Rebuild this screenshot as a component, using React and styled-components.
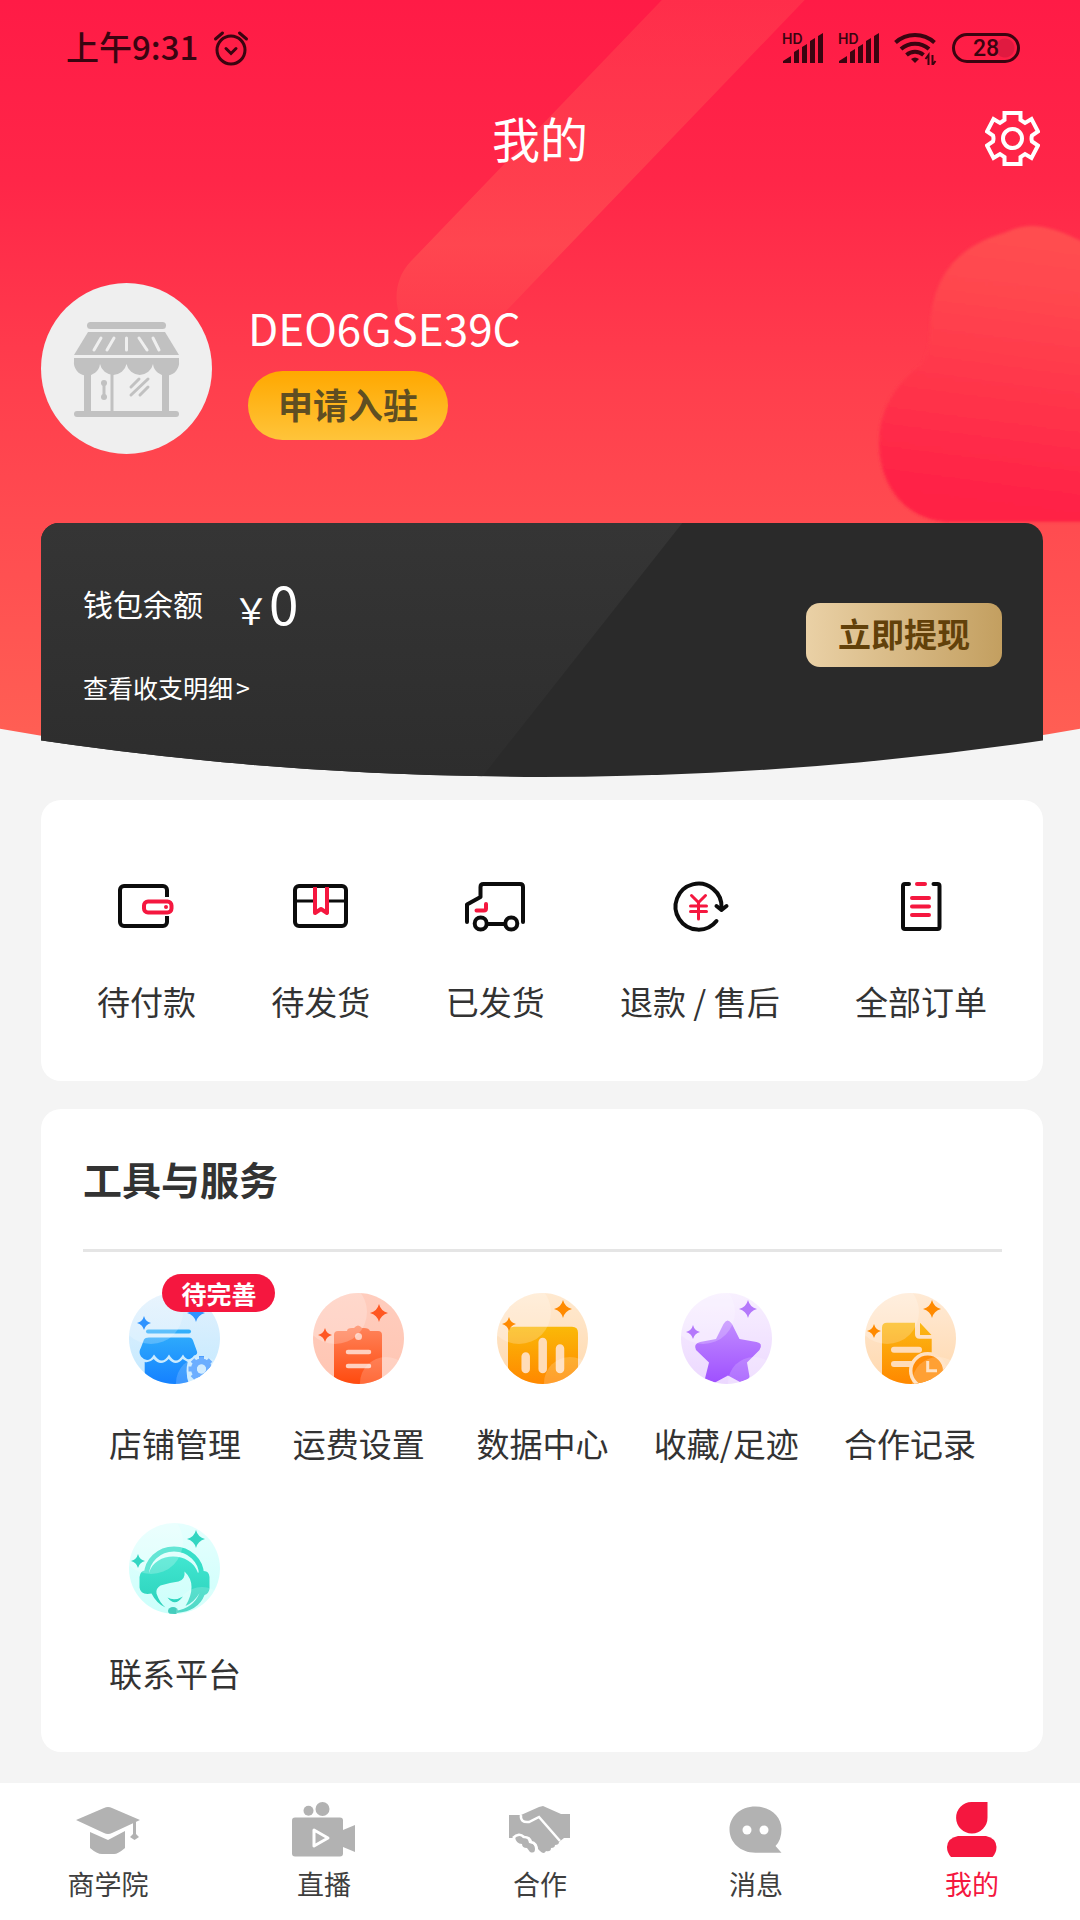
import React from 'react'
import styled, { createGlobalStyle } from 'styled-components'

const RED = '#f5173f'
const INK = '#3a0410'
const TEXT = '#333333'
const GREY = '#b2b2b2'

const GlobalStyle = createGlobalStyle`
    * {
        box-sizing: border-box;
    }
    body {
        margin: 0;
        background: #f4f4f4;
        color: ${TEXT};
        font-family: "Noto Sans CJK SC", "Noto Sans", sans-serif;
    }
    h1, h2, p {
        margin: 0;
    }
    svg {
        display: block;
    }
`

const Page = styled.div`
    min-height: 100vh;
    display: flex;
    flex-direction: column;
`

const Hero = styled.header`
    position: relative;
    isolation: isolate;
`

const HeroBackground = styled.div`
    position: absolute;
    inset: 0 0 1px;
    z-index: -1;
    overflow: hidden;
    background: linear-gradient(#ff1b46 0, #ff2648 180px, #ff3f4d 390px, #ff4b50 520px, #ff5f54 740px);
    clip-path: circle(3102px at 50% calc(100% - 3102px));
`

const BandArt = styled.svg`
    position: absolute;
    top: 0;
    left: 50%;
    margin-left: -150px;
`

const BlobArt = styled.svg`
    position: absolute;
    top: 210px;
    right: 0;
`

const StatusBar = styled.div`
    height: 96px;
    padding: 0 60px 0 66px;
    display: flex;
    align-items: center;
    justify-content: space-between;
    color: ${INK};
`

const StatusGroup = styled.div`
    display: flex;
    align-items: center;
    gap: 15px;
`

const Clock = styled.span`
    padding-bottom: 4px;
    font-size: 33px;
    line-height: 48px;
    font-weight: 500;
`

const Battery = styled.span`
    width: 68px;
    height: 30px;
    border: 3px solid ${INK};
    border-radius: 15px;
    font: 500 23px/25px Roboto, sans-serif;
    text-align: center;
    background: radial-gradient(circle at 50px 12px, #e01a40 9px, transparent 10px);
`

const TitleBar = styled.div`
    height: 84px;
    padding: 0 40px;
    display: grid;
    grid-template-columns: 1fr auto 1fr;
    align-items: center;
`

const Title = styled.h1`
    grid-column: 2;
    padding-bottom: 2px;
    font-size: 48px;
    line-height: 70px;
    font-weight: 400;
    color: #ffffff;
`

const IconButton = styled.button`
    justify-self: end;
    padding: 0;
    border: 0;
    background: none;
    cursor: pointer;
`

const Profile = styled.section`
    padding: 103px 37px 69px 41px;
    display: flex;
    align-items: center;
    gap: 36px;
`

const Avatar = styled.div`
    width: 171px;
    height: 171px;
    border-radius: 50%;
    background: #efefef;
`

const ShopName = styled.h2`
    font-size: 44px;
    line-height: 60px;
    font-weight: 400;
    color: #ffffff;
`

const ApplyButton = styled.button`
    height: 69px;
    margin-top: 14px;
    padding: 0 30px 4px;
    border: 0;
    border-radius: 35px;
    background: linear-gradient(#ffa800, #ffc43a);
    color: #5f4e22;
    font: inherit;
    font-size: 35px;
    font-weight: 700;
    cursor: pointer;
`

const Wallet = styled.section`
    position: relative;
    isolation: isolate;
    margin: 0 37px 0 41px;
    padding: 42px 41px 72px 42px;
    border-radius: 18px 18px 0 0;
    background: #2a2a2a;
    color: #ffffff;
    display: flex;
    align-items: center;
    justify-content: space-between;
    clip-path: circle(3458px at 50% calc(100% - 3458px));

    &::before {
        content: '';
        position: absolute;
        inset: 0;
        z-index: -1;
        border-radius: inherit;
        background: linear-gradient(#353535, #2d2d2d);
        clip-path: polygon(0 0, 64% 0, 44% 100%, 0 100%);
    }
`

const Balance = styled.div`
    height: 76px;
    display: flex;
    align-items: center;
    gap: 30px;
    font-size: 30px;
    line-height: 76px;
`

const Amount = styled.span`
    padding-top: 4px;
    display: flex;
    align-items: baseline;
    font-size: 53px;

    small {
        font-size: 36px;
    }
`

const DetailLink = styled.a`
    display: flex;
    gap: 3px;
    margin-top: 28px;
    font-size: 25px;
    line-height: 36px;
    color: inherit;
    text-decoration: none;
`

const WithdrawButton = styled.button`
    height: 64px;
    padding: 0 32px 4px;
    border: 0;
    border-radius: 14px;
    background: linear-gradient(90deg, #ead1a6, #c39f60);
    color: #62410a;
    font: inherit;
    font-size: 33px;
    font-weight: 700;
    cursor: pointer;
`

const Main = styled.main`
    flex: 1;
    padding: 23px 37px 31px 41px;
    display: flex;
    flex-direction: column;
    gap: 28px;
`

const Card = styled.section`
    border-radius: 20px;
    background: #ffffff;
`

const OrderList = styled(Card)`
    padding: 76px 56px 56px;
    display: flex;
    justify-content: space-between;
`

const Entry = styled.a`
    display: flex;
    flex-direction: column;
    align-items: center;
    gap: ${(props) => props.$gap}px;
    font-size: 33px;
    line-height: 48px;
    color: ${TEXT};
    text-decoration: none;
    white-space: nowrap;
`

const Tools = styled(Card)`
    padding: 40px 41px 55px 42px;
`

const ToolsTitle = styled.h2`
    padding-bottom: 42px;
    border-bottom: 3px solid #e5e5e5;
    font-size: 39px;
    line-height: 58px;
    font-weight: 700;
`

const ToolGrid = styled.div`
    padding-top: 41px;
    display: grid;
    grid-template-columns: repeat(5, 1fr);
    row-gap: 56px;
`

const ToolIcon = styled.span`
    position: relative;
`

const Badge = styled.span`
    position: absolute;
    top: -19px;
    left: 33px;
    padding: 0 19px;
    border-radius: 19px;
    background: ${RED};
    color: #ffffff;
    font-size: 25px;
    line-height: 38px;
    font-weight: 700;
`

const TabBar = styled.nav`
    position: sticky;
    bottom: 0;
    padding: 18px 0;
    display: grid;
    grid-template-columns: repeat(5, 1fr);
    background: #ffffff;
`

const Tab = styled.a`
    display: flex;
    flex-direction: column;
    align-items: center;
    gap: 9px;
    font-size: 27px;
    line-height: 36px;
    color: ${(props) => (props.$active ? RED : '#3e3e3e')};
    text-decoration: none;
`

/* status bar */

const AlarmIcon = () => (
    <svg width="36" height="36" viewBox="0 0 36 36" fill="none" stroke={INK} strokeWidth="3" strokeLinecap="round">
        <circle cx="18" cy="20" r="14" />
        <path d="M13 18.500l5 5 5-5M2.500 9l7-6M33.500 9l-7-6" />
    </svg>
)

const SignalIcon = () => (
    <svg width="41" height="44" viewBox="0 -6 41 44" fill={INK}>
        <text x="0" y="12" fontFamily="Inter, sans-serif" fontSize="14" fontWeight="600">HD</text>
        <path d="M1 31v-2l8-5v7zM12 31V20l5-3v14zM20 31V15l5-3v19zM28 31V9l5-3v25zM36 31V4l5-3v30z" />
    </svg>
)

const WifiIcon = () => (
    <svg width="43" height="34" viewBox="0 0 43 34" fill="none" stroke={INK} strokeWidth="4">
        <path d="M1.500 11.500a29 29 0 0 1 39 0M7 18a21 21 0 0 1 28 0M12.500 24a13 13 0 0 1 17 0" />
        <path d="M17 28q4-3 8 0l-4 4z" fill={INK} stroke="none" />
        <path d="M34.500 34V24l-3 4M38.500 24v10l3-4" strokeWidth="2" />
    </svg>
)

/* hero */

const Band = () => (
    <BandArt width="450" height="360" viewBox="390 0 450 360">
        <defs>
            <linearGradient id="band" gradientUnits="userSpaceOnUse" x1="0" y1="0" x2="0" y2="350">
                <stop offset="0" stopColor="#ff6a58" stopOpacity="0.23" />
                <stop offset="0.700" stopColor="#ff6a58" stopOpacity="0.400" />
                <stop offset="1" stopColor="#ff6a58" stopOpacity="0.040" />
            </linearGradient>
        </defs>
        <path d="M448 297L812-82" stroke="url(#band)" strokeWidth="103" strokeLinecap="round" />
    </BandArt>
)

const Blob = () => (
    <BlobArt width="210" height="330" viewBox="870 210 210 330">
        <defs>
            <linearGradient id="blob" x1="0.100" y1="0" x2="0" y2="1">
                <stop offset="0" stopColor="#ff4d4f" />
                <stop offset="0.200" stopColor="#ff454e" />
                <stop offset="0.900" stopColor="#ff2045" />
            </linearGradient>
            <filter id="soft"><feGaussianBlur stdDeviation="1.500" /></filter>
        </defs>
        <path
            d="M1100 252Q1058 226 1032 226Q1018 226 1004 233Q931 254 930 330Q930 350 922 364Q879 396 879 442C879 492 912 522 950 522H1100Z"
            fill="url(#blob)"
            filter="url(#soft)"
        />
    </BlobArt>
)

const GearIcon = () => (
    <svg width="55" height="55" viewBox="0 0 55 55" fill="none" stroke="#ffffff" strokeWidth="4">
        <path d="M19.500 2h16v7l4.500 3 6.500-4 6.500 12.500-6 4q-1 3 0 6l6 4-6.500 12.500-6.500-4-4.500 3v7h-16v-7L15 43l-6.500 4L2 34.500l6-4q1-3 0-6l-6-4L8.500 8l6.500 4 4.500-3z" />
        <circle cx="27.500" cy="27.500" r="9.500" />
    </svg>
)

const StoreArt = () => (
    <svg width="171" height="171" viewBox="0 0 171 171" fill="#c1c1c1">
        <rect x="46" y="39" width="79" height="7" rx="3.500" />
        <path d="M47 49h77l14 23H33z" />
        <path d="M60 55l-7 12M73 55l-7 12M85.500 55v12M98 55l8 12M112 55l6 12" stroke="#efefef" strokeWidth="3" strokeLinecap="round" />
        <path d="M33 75h105v3a13 13 0 0 1-26 3a13.500 13.500 0 0 1-26.500 0a13.500 13.500 0 0 1-26.500 0a13 13 0 0 1-26-3z" />
        <path d="M43 86h7v43h-7zM121 86h7v43h-7zM69.500 86h3v43h-3z" />
        <rect x="33" y="128" width="105" height="6" rx="3" />
        <path d="M63 100v14" stroke="#c1c1c1" strokeWidth="3" />
        <circle cx="63" cy="100" r="3" />
        <circle cx="63" cy="114" r="3" />
        <path d="M98 96l-8 8M107 96l-17 16M107 104l-8 8" stroke="#c1c1c1" strokeWidth="3" strokeLinecap="round" />
    </svg>
)

/* orders */

const LineIcon = ({ children }) => (
    <svg width="60" height="60" viewBox="0 0 60 60" fill="none" stroke="#0c0c0c" strokeWidth="4" strokeLinecap="round" strokeLinejoin="round">
        {children}
    </svg>
)

const UnpaidIcon = () => (
    <LineIcon>
        <path d="M50 21v-7a4 4 0 0 0-4-4H7a4 4 0 0 0-4 4v32a4 4 0 0 0 4 4h39a4 4 0 0 0 4-4v-6" strokeLinecap="butt" />
        <rect x="27" y="25.500" width="27.500" height="11" rx="4" stroke={RED} />
        <circle cx="49" cy="31" r="2" fill={RED} stroke="none" />
    </LineIcon>
)

const PackIcon = () => (
    <LineIcon>
        <rect x="4" y="10" width="51" height="40" rx="4" />
        <path d="M5 25h18M37 25h17" strokeWidth="3" />
        <path d="M24 11v26l6-4 6 4V11" stroke={RED} strokeLinecap="butt" />
    </LineIcon>
)

const TruckIcon = () => (
    <LineIcon>
        <path d="M2 46V28.500L15.500 21V11q0-3 3-3H55q3 0 3 3v35" />
        <circle cx="15.700" cy="47.500" r="6" />
        <circle cx="46.300" cy="47.500" r="6" />
        <path d="M22 48h18" />
        <path d="M11.500 34.500H19q2 0 2-2V28" stroke={RED} />
    </LineIcon>
)

const RefundIcon = () => (
    <LineIcon>
        <path d="M46.500 45A23 23 0 1 1 51.500 32" />
        <path d="M46.500 30l5 4 5-4" />
        <path d="M21.500 19.500l7 7 7-7M28.500 26.500V43M20.500 30h16M20.500 35.500h16" stroke={RED} strokeWidth="3" />
    </LineIcon>
)

const AllOrdersIcon = () => (
    <LineIcon>
        <path d="M18 8h-4q-2 0-2 2v41q0 2 2 2h32.500q2 0 2-2V10q0-2-2-2h-4" />
        <path d="M26 8h8" stroke={RED} />
        <path d="M21 22h17M21 30.500h17M21 39h17" stroke={RED} strokeWidth="4" />
    </LineIcon>
)

/* tools */

const Spark = ({ x, y, r, color }) => (
    <path
        fill={color}
        transform={`translate(${x} ${y}) scale(${r})`}
        d="M0-1Q.200-.200 1 0Q.200.200 0 1Q-.200.200-1 0Q-.200-.200 0-1Z"
    />
)

const RoundIcon = ({ id, bg, fg, spark, small, big, children }) => (
    <svg width="91" height="91" viewBox="0 0 91 91">
        <defs>
            <clipPath id={`${id}-clip`}><circle cx="45.500" cy="45.500" r="45.500" /></clipPath>
            <linearGradient id={`${id}-bg`} x1="0" y1="0" x2="0" y2="1">
                <stop offset="0" stopColor={bg[0]} />
                <stop offset="1" stopColor={bg[1]} />
            </linearGradient>
            <linearGradient id={`${id}-fg`} gradientUnits="userSpaceOnUse" x1="0" y1="30" x2="0" y2="88">
                <stop offset="0" stopColor={fg[0]} />
                <stop offset="1" stopColor={fg[1]} />
            </linearGradient>
        </defs>
        <g clipPath={`url(#${id}-clip)`}>
            <rect width="91" height="91" fill={`url(#${id}-bg)`} />
            <g fill={`url(#${id}-fg)`}>{children}</g>
            <circle cx="22" cy="19" r="32" fill="#ffffff" opacity="0.220" />
            <circle cx="73" cy="90" r="26" fill="#ffffff" opacity="0.180" />
        </g>
        <Spark x={small[0]} y={small[1]} r={7} color={spark} />
        <Spark x={big[0]} y={big[1]} r={9} color={spark} />
    </svg>
)

const ShopToolIcon = () => (
    <RoundIcon id="shop" bg={['#e2f1fd', '#c3e9ff']} fg={['#35b6fb', '#1683ff']} spark="#2f93ff" small={[15, 30]} big={[67, 20]}>
        <rect x="17" y="36.500" width="45" height="4" rx="2" />
        <path d="M20 44.500h40q3 0 4 3l4 11q1 3-3 4q-6 8-11-1q-7 12-14 0q-7 12-15 0q-6 10-13 2q-3-4 0-9l3-8q1-2 5-2z" />
        <path d="M15.700 69q5 1 9-3q7 8 15 0q7 8 14 0l5 3q-3 12 2 24H15.700z" />
        <g stroke="#4c9dff" strokeWidth="6">
            <circle cx="72.500" cy="76" r="7.500" fill="none" />
            <path d="M72.500 63v26M59.500 76h26M63.500 67l18 18M81.500 67l-18 18" strokeWidth="5" strokeDasharray="6 14 6" />
        </g>
        <circle cx="72.500" cy="76" r="4.500" fill="#c9e8ff" />
    </RoundIcon>
)

const FreightIcon = () => (
    <RoundIcon id="freight" bg={['#ffcdbe', '#ffc5b2']} fg={['#ff875f', '#ff4d12']} spark="#ff5722" small={[12, 42]} big={[66, 20]}>
        <path d="M25 38h9q0-3 5-3h2q4-5 8 0h2q5 0 6 3h8q4 0 4 4v49H21V42q0-4 4-4z" />
        <circle cx="45.500" cy="43.500" r="3.500" fill="#ffd0c0" />
        <path d="M35 59h21M35 73h21" stroke="#ffd0c0" strokeWidth="4.500" strokeLinecap="round" />
    </RoundIcon>
)

const DataIcon = () => (
    <RoundIcon id="data" bg={['#ffe9d0', '#ffd9ae']} fg={['#fabc08', '#ff8a00']} spark="#ff8a00" small={[12, 31]} big={[66, 16]}>
        <path d="M17 33.700h58q6 0 6 6V91H11V39.700q0-6 6-6z" />
        <path d="M28.700 63.500v12.500M45.700 49v27M63 55.500v20.500" stroke="#ffdcb8" strokeWidth="8.500" strokeLinecap="round" />
    </RoundIcon>
)

const StarIcon = () => (
    <RoundIcon id="star" bg={['#f8f0ff', '#ecd8ff']} fg={['#c08aff', '#a052ff']} spark="#b478fb" small={[12, 39]} big={[67, 16]}>
        <path d="M42.500 31q4-7 8.500 0l7.500 15 17 3q7 1 3 8L66 69.500l2.500 14q0 2-2 3L59 89l-12-6.500L34 89.500l-10-4 4-16L15 57q-3-6 4-8l16-3z" />
    </RoundIcon>
)

const RecordIcon = () => (
    <RoundIcon id="record" bg={['#ffead5', '#ffd8ae']} fg={['#fbb913', '#ff8a00']} spark="#ff8a00" small={[9, 38]} big={[67, 16]}>
        <path d="M22 29.700h28V41q0 4.700 4.700 4.700h12V91H17V34.700q0-5 5-5zM55 29.700L66.500 42H55z" />
        <path d="M29 56.700h25M29 71h20" stroke="#ffdcb8" strokeWidth="6" strokeLinecap="round" />
        <circle cx="62.700" cy="77.700" r="17" fill="#ff8c08" stroke="#ffe0c0" strokeWidth="3.500" />
        <path d="M62.700 68v9.700H72" fill="none" stroke="#ffdcb8" strokeWidth="3" />
    </RoundIcon>
)

const ServiceIcon = () => (
    <RoundIcon id="service" bg={['#e6fffe', '#ccfffb']} fg={['#42e8d2', '#2bd0ba']} spark="#33d6c2" small={[9, 38]} big={[67, 16]}>
        <path d="M17.500 52a27.500 26 0 0 1 55 0" fill="none" stroke="#38dfc9" strokeWidth="5" />
        <path d="M20 50C26 28 62 28 69 50q2-3 6-2q5 0 5.500 6v12q-1 5-5 6q-6 16-28 18l-1-2q18-3 24-18q-5 9-14 13q6-10 6-19q0-9-7-15.500q1 8-6 10q-8 1-18 4q-5 3-4 8q3 9 9 14q-9-4-14-14q-11 2-12-6V54q1-7 6-6.500z" />
        <path d="M38.500 74.500q7 4 15.500-1q-8 11-15.500 1z" />
        <ellipse cx="44" cy="88" rx="5" ry="4" fill="#45cdbd" />
    </RoundIcon>
)

/* tab bar */

const TabIcon = ({ color = GREY, children }) => (
    <svg width="64" height="56" viewBox="0 0 64 56" fill={color}>
        {children}
    </svg>
)

const SchoolIcon = () => (
    <TabIcon>
        <path d="M0 19L28 7q4-2 8 0l28 12-28 13q-4 2-8 0z" />
        <path d="M14 31l18 8 17-9v17q-7 6-11 6H26q-5 0-12-6zM57 21h3v12l3 3-4.500 3-4.500-3 3-3z" />
    </TabIcon>
)

const LiveIcon = () => (
    <TabIcon>
        <circle cx="16.500" cy="9.700" r="5" />
        <circle cx="30.500" cy="8" r="7" />
        <rect x="0" y="16.500" width="51" height="39" rx="3" />
        <path d="M51 29l12-5v27l-12-5z" />
        <path d="M22 29l14 8-14 8z" stroke="#ffffff" strokeWidth="3" strokeLinejoin="round" />
    </TabIcon>
)

const HandshakeIcon = () => (
    <TabIcon>
        <path d="M1 14h12l18-8 4-1 18 8h9v24h-6l-5 4q0 3-4 3q0 3-4 3q0 4-5 3q-2 4-6 0l-3-3q0-5-5-6q-2-6-8-4q-6-4-10 0H1z" />
        <path d="M7 36q4-5 8 1q5-1 6 5q6 0 6 6q0 5-5 3l-3-4q-5 0-5-4q-6 0-7-7z" />
        <path d="M13 14q-1 8 8 7l10-5 21 24M5 37q6-6 11-1q6 0 7 5q6 1 6 9" fill="none" stroke="#ffffff" strokeWidth="2.500" />
    </TabIcon>
)

const MessageIcon = () => (
    <TabIcon>
        <path d="M31.500 5.500C47 5.500 57.500 16 57.500 28q0 11-6 17l6 6.700h-26C16 51.700 5.500 41 5.500 28.500S16 5.500 31.500 5.500z" />
        <circle cx="23" cy="29" r="4.500" fill="#ffffff" />
        <circle cx="40" cy="29" r="4.500" fill="#ffffff" />
    </TabIcon>
)

const MineIcon = () => (
    <TabIcon color={RED}>
        <path d="M31.500 1h16v15.500a15.700 15.700 0 1 1-16-15.500z" />
        <path d="M18 35h28q10 2 10.500 11q0 6-4.500 10.500H11.500Q7 52 7 46q.500-9 11-11z" />
    </TabIcon>
)

const orders = [
    { label: '待付款', icon: UnpaidIcon },
    { label: '待发货', icon: PackIcon },
    { label: '已发货', icon: TruckIcon },
    { label: '退款 / 售后', icon: RefundIcon },
    { label: '全部订单', icon: AllOrdersIcon },
]

const tools = [
    { label: '店铺管理', icon: ShopToolIcon, badge: '待完善' },
    { label: '运费设置', icon: FreightIcon },
    { label: '数据中心', icon: DataIcon },
    { label: '收藏/足迹', icon: StarIcon },
    { label: '合作记录', icon: RecordIcon },
    { label: '联系平台', icon: ServiceIcon },
]

const tabs = [
    { label: '商学院', icon: SchoolIcon },
    { label: '直播', icon: LiveIcon },
    { label: '合作', icon: HandshakeIcon },
    { label: '消息', icon: MessageIcon },
    { label: '我的', icon: MineIcon, active: true },
]

function App () {
    return (
        <Page>
            <GlobalStyle />
            <Hero>
                <HeroBackground>
                    <Band />
                    <Blob />
                </HeroBackground>
                <StatusBar>
                    <StatusGroup>
                        <Clock>上午9:31</Clock>
                        <AlarmIcon />
                    </StatusGroup>
                    <StatusGroup>
                        <SignalIcon />
                        <SignalIcon />
                        <WifiIcon />
                        <Battery>28</Battery>
                    </StatusGroup>
                </StatusBar>
                <TitleBar>
                    <Title>我的</Title>
                    <IconButton type="button" aria-label="设置">
                        <GearIcon />
                    </IconButton>
                </TitleBar>
                <Profile>
                    <Avatar>
                        <StoreArt />
                    </Avatar>
                    <div>
                        <ShopName>DEO6GSE39C</ShopName>
                        <ApplyButton type="button">申请入驻</ApplyButton>
                    </div>
                </Profile>
                <Wallet>
                    <div>
                        <Balance>
                            <span>钱包余额</span>
                            <Amount><small>{'\uFFE5'}</small>0</Amount>
                        </Balance>
                        <DetailLink href="#detail">
                            <span>查看收支明细</span>
                            <span>&gt;</span>
                        </DetailLink>
                    </div>
                    <WithdrawButton type="button">立即提现</WithdrawButton>
                </Wallet>
            </Hero>
            <Main>
                <OrderList>
                    {orders.map(({ label, icon: Icon }) => (
                        <Entry key={label} href="#orders" $gap={41}>
                            <Icon />
                            <span>{label}</span>
                        </Entry>
                    ))}
                </OrderList>
                <Tools>
                    <ToolsTitle>工具与服务</ToolsTitle>
                    <ToolGrid>
                        {tools.map(({ label, icon: Icon, badge }) => (
                            <Entry key={label} href="#tools" $gap={35}>
                                <ToolIcon>
                                    <Icon />
                                    {badge && <Badge>{badge}</Badge>}
                                </ToolIcon>
                                <span>{label}</span>
                            </Entry>
                        ))}
                    </ToolGrid>
                </Tools>
            </Main>
            <TabBar>
                {tabs.map(({ label, icon: Icon, active }) => (
                    <Tab key={label} href="#tab" $active={active}>
                        <Icon />
                        <span>{label}</span>
                    </Tab>
                ))}
            </TabBar>
        </Page>
    )
}

export default App
